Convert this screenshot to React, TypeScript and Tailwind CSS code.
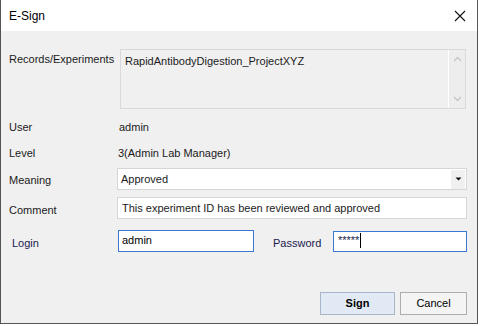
import { useState } from 'react';

const font = { fontFamily: '"Liberation Sans", Arial, sans-serif' };

function Label({ children, className = '' }: { children: React.ReactNode; className?: string }) {
  return <div className={`text-[11px] text-[#1b1b1b] ${className}`}>{children}</div>;
}

export default function App() {
  const [comment, setComment] = useState('This experiment ID has been reviewed and approved');
  const [login, setLogin] = useState('admin');

  return (
    <div className="w-[481px] h-[326px] bg-white" style={font}>
      <div className="w-[478px] h-[324px] flex flex-col bg-[#f0f0f0] border-l border-r border-b border-[#555555]">
        {/* Title bar */}
        <div className="h-[31px] bg-white flex items-center justify-between pl-[8px] pr-[10px]">
          <span className="text-[12px] text-black">E-Sign</span>
          <svg width="12" height="12" viewBox="0 0 12 12" className="mr-[1px]">
            <path d="M1 1 L11 11 M11 1 L1 11" stroke="#111" strokeWidth="1.1" fill="none" />
          </svg>
        </div>

        {/* Body */}
        <div className="flex flex-col pl-[8px]">
          {/* Records */}
          <div className="flex mt-[18px] h-[60px]">
            <Label className="w-[111px] pt-[2px]">Records/Experiments</Label>
            <div className="w-[346px] h-[60px] flex border border-[#d9d9d9] bg-[#f0f0f0]">
              <div className="flex-1 pl-[4px] pt-[3px] text-[11px] text-[#1b1b1b]">
                RapidAntibodyDigestion_ProjectXYZ
              </div>
              <div className="w-[17px] flex flex-col justify-between items-center border-l border-white bg-[#ededed] py-[6px]">
                <svg width="9" height="6" viewBox="0 0 9 6">
                  <path d="M1 5 L4.5 1.5 L8 5" stroke="#c2c2c2" strokeWidth="1.2" fill="none" />
                </svg>
                <svg width="9" height="6" viewBox="0 0 9 6">
                  <path d="M1 1 L4.5 4.5 L8 1" stroke="#c2c2c2" strokeWidth="1.2" fill="none" />
                </svg>
              </div>
            </div>
          </div>

          {/* User */}
          <div className="flex items-center mt-[8px] h-[20px]">
            <Label className="w-[110px]">User</Label>
            <Label>admin</Label>
          </div>

          {/* Level */}
          <div className="flex items-center mt-[6px] h-[20px]">
            <Label className="w-[109px]">Level</Label>
            <Label>3(Admin Lab Manager)</Label>
          </div>

          {/* Meaning */}
          <div className="flex items-center mt-[5px] h-[22px]">
            <Label className="w-[108px] pt-[3px]">Meaning</Label>
            <div className="w-[350px] h-[22px] flex items-center bg-white border border-[#d6d6d6]">
              <span className="flex-1 pl-[3px] text-[11px] text-[#1b1b1b]">Approved</span>
              <div className="w-[14px] h-[19px] mr-[1px] bg-[#f0f0f0] flex items-center justify-center">
                <svg width="7" height="4" viewBox="0 0 7 4">
                  <path d="M0.5 0.5 L6.5 0.5 L3.5 3.5 Z" fill="#111" />
                </svg>
              </div>
            </div>
          </div>

          {/* Comment */}
          <div className="flex items-center mt-[7px] h-[22px]">
            <Label className="w-[108px] pt-[4px]">Comment</Label>
            <input
              value={comment}
              onChange={(e) => setComment(e.target.value)}
              className="w-[350px] h-[22px] bg-white border border-[#d6d6d6] pl-[4px] text-[11px] text-[#1b1b1b] outline-none"
            />
          </div>

          {/* Login / Password */}
          <div className="flex items-center mt-[11px] h-[22px]">
            <div className="w-[109px] pl-[3px] pt-[4px] text-[11px] text-[#1a1a4e]">Login</div>
            <input
              value={login}
              onChange={(e) => setLogin(e.target.value)}
              className="w-[136px] h-[22px] bg-white border border-[#3b78d3] pl-[3px] pb-[3px] text-[11px] text-black outline-none"
            />
            <div className="w-[79px] pl-[19px] pt-[4px] text-[11px] text-[#1a1a4e]">Password</div>
            <div className="w-[134px] h-[21px] bg-white border border-[#3b78d3] flex items-start pl-[4px] pt-[1px]">
              <span className="text-[11px] leading-[15px] text-[#1a1a4e]">*****</span>
              <span className="w-px h-[15px] bg-black ml-px" />
            </div>
          </div>

          {/* Buttons */}
          <div className="flex justify-end gap-[5px] mt-[40px] pr-[10px]">
            <button className="w-[75px] h-[23px] bg-[#e1e9f5] border border-[#a8b6cc] text-[11px] font-bold text-black">
              Sign
            </button>
            <button className="w-[67px] h-[23px] bg-[#f4f4f4] border border-[#adadad] text-[11px] text-black">
              Cancel
            </button>
          </div>
        </div>
      </div>
    </div>
  );
}
